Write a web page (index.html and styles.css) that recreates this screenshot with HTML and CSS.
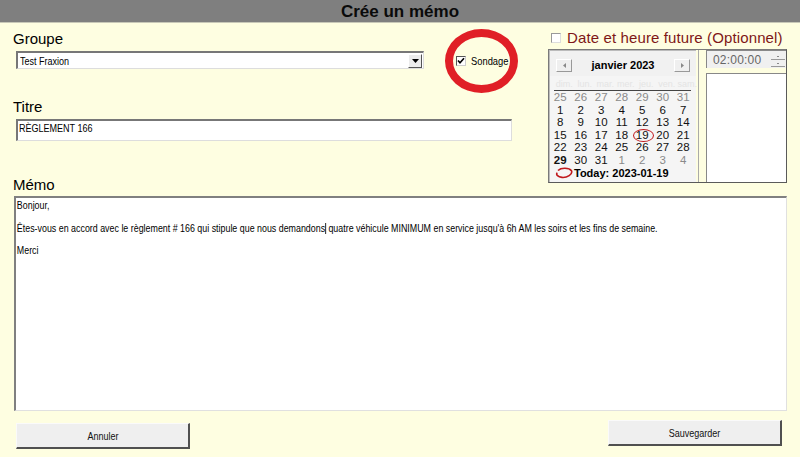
FILE: index.html
```html
<!DOCTYPE html>
<html lang="fr">
<head>
<meta charset="utf-8">
<title>Crée un mémo</title>
<link rel="stylesheet" href="styles.css">
</head>
<body>
<div class="titlebar">Crée un mémo</div>
<div class="main">
  <div class="top">
    <div class="left">
      <div class="label">Groupe</div>
      <div class="row-groupe">
        <div class="select">
          <span class="select-text narrow">Test Fraxion</span>
          <span class="select-btn"><svg width="7" height="4" viewBox="0 0 7 4"><path d="M0 0H7L3.5 4Z" fill="#000"/></svg></span>
        </div>
        <div class="sondage">
          <span class="cb"><svg width="8" height="8" viewBox="0 0 8 8"><path d="M1 3.5L3 5.8L7 1.2" stroke="#000" stroke-width="1.6" fill="none"/></svg></span>
          <span class="sondage-text narrow">Sondage</span>
          <span class="ring"></span>
        </div>
      </div>
      <div class="label label-titre">Titre</div>
      <div class="input"><span class="narrow">RÈGLEMENT 166</span></div>
      <div class="label label-memo">Mémo</div>
    </div>
    <div class="right">
      <div class="datechk"><span class="cb cb-empty"></span><span class="date-text">Date et heure future (Optionnel)</span></div>
      <div class="picker">
        <div class="cal">
          <div class="cal-head">
            <span class="navbtn"><svg width="3" height="5" viewBox="0 0 3 5"><path d="M3 0V5L0 2.5Z" fill="#888"/></svg></span>
            <span class="month">janvier 2023</span>
            <span class="navbtn"><svg width="3" height="5" viewBox="0 0 3 5"><path d="M0 0V5L3 2.5Z" fill="#888"/></svg></span>
          </div>
          <div class="dow"><span>dim.</span><span>lun.</span><span>mar.</span><span>mer.</span><span>jeu.</span><span>ven.</span><span>sam.</span></div>
          <div class="days">
            <span class="o">25</span><span class="o">26</span><span class="o">27</span><span class="o">28</span><span class="o">29</span><span class="o">30</span><span class="o">31</span>
            <span>1</span><span>2</span><span>3</span><span>4</span><span>5</span><span>6</span><span>7</span>
            <span>8</span><span>9</span><span>10</span><span>11</span><span>12</span><span>13</span><span>14</span>
            <span>15</span><span>16</span><span>17</span><span>18</span><span class="today">19<i class="mark"></i></span><span>20</span><span>21</span>
            <span>22</span><span>23</span><span>24</span><span>25</span><span>26</span><span>27</span><span>28</span>
            <span class="b">29</span><span>30</span><span>31</span><span class="o">1</span><span class="o">2</span><span class="o">3</span><span class="o">4</span>
          </div>
          <div class="todayline"><svg width="18" height="12" viewBox="0 0 18 12"><path d="M3 3.5C6 0.5 14 0.5 16.5 3.8C18 7.5 12 10.8 7 10.4C3 10 0.6 7.8 2.2 5.6" stroke="#c0181c" stroke-width="1.6" fill="none"/></svg><span>Today: 2023-01-19</span></div>
        </div>
        <div class="timecol">
          <div class="timebox">
            <span class="time">02:00:00</span>
            <span class="spin"><span class="spin-up"></span><span class="spin-down"></span></span>
          </div>
          <div class="listbox"></div>
        </div>
      </div>
    </div>
  </div>
  <div class="memo">
    <div class="memo-text">
      <p>Bonjour,</p>
      <p>&nbsp;</p>
      <p>Êtes-vous en accord avec le règlement # 166 qui stipule que nous demandons<span class="caret"></span> quatre véhicule MINIMUM en service jusqu'à 6h AM les soirs et les fins de semaine.</p>
      <p>&nbsp;</p>
      <p>Merci</p>
    </div>
  </div>
  <div class="buttons">
    <div class="btn btn-cancel"><span class="narrow">Annuler</span></div>
    <div class="btn btn-save"><span class="narrow">Sauvegarder</span></div>
  </div>
</div>
</body>
</html>
```
FILE: styles.css
```css
html, body {
  margin: 0;
  padding: 0;
}
body {
  width: 800px;
  height: 457px;
  overflow: hidden;
  background: #fefee1;
  font-family: "Liberation Sans", Arial, sans-serif;
  color: #000;
}
.narrow {
  display: inline-block;
  transform: scaleX(0.82);
  transform-origin: 0 50%;
  white-space: nowrap;
}
.titlebar {
  height: 23px;
  line-height: 23px;
  background: #7f7f7f;
  text-align: center;
  font-weight: bold;
  font-size: 17px;
  color: #0a0a0a;
  border-bottom: 1px solid #c8c8b8;
  box-sizing: border-box;
}
.main {
  display: flex;
  flex-direction: column;
}
.top {
  display: flex;
  padding: 7px 13px 0 13px;
  justify-content: space-between;
}
.left {
  display: flex;
  flex-direction: column;
  width: 520px;
}
.label {
  font-size: 15px;
  line-height: 17px;
}
.row-groupe {
  display: flex;
  align-items: center;
  margin-top: 4px;
  margin-left: 3px;
}
.select {
  width: 408px;
  height: 18px;
  box-sizing: border-box;
  background: #fff;
  border-top: 2px solid #777;
  border-left: 2px solid #777;
  border-right: 1px solid #ddd;
  border-bottom: 1px solid #ddd;
  display: flex;
  align-items: center;
  justify-content: space-between;
}
.select-text {
  font-size: 11px;
  margin-left: 2px;
}
.select-btn {
  width: 14px;
  height: 14px;
  box-sizing: border-box;
  background: #ececec;
  border-top: 1px solid #fff;
  border-left: 1px solid #fff;
  border-right: 1px solid #555;
  border-bottom: 1px solid #555;
  display: flex;
  align-items: center;
  justify-content: center;
  margin-right: 1px;
}
.sondage {
  position: relative;
  display: flex;
  align-items: center;
  margin-left: 32px;
  margin-top: 2px;
  width: 60px;
}
.cb {
  width: 10px;
  height: 10px;
  box-sizing: border-box;
  background: #fff;
  border-top: 1px solid #555;
  border-left: 1px solid #555;
  border-right: 1px solid #ccc;
  border-bottom: 1px solid #ccc;
  display: flex;
  align-items: center;
  justify-content: center;
  flex: none;
}
.sondage-text {
  font-size: 11px;
  margin-left: 5px;
  transform: scaleX(0.85);
}
.ring {
  position: absolute;
  left: -11px;
  top: -26px;
  width: 73px;
  height: 64px;
  box-sizing: border-box;
  border: 8px solid #e01f26;
  border-radius: 50%;
}
.label-titre {
  margin-top: 29px;
}
.input {
  margin-top: 4px;
  margin-left: 3px;
  width: 496px;
  height: 22px;
  box-sizing: border-box;
  background: #fff;
  border-top: 2px solid #777;
  border-left: 2px solid #777;
  border-right: 1px solid #ddd;
  border-bottom: 1px solid #ddd;
  font-size: 11px;
  padding: 1px 0 0 1px;
  line-height: 12px;
}
.label-memo {
  margin-top: 35px;
}
.right {
  width: 239px;
  display: flex;
  flex-direction: column;
}
.datechk {
  display: flex;
  align-items: center;
  padding-left: 3px;
  height: 17px;
  margin-top: -1px;
}
.cb-empty {
  border-color: #999 #ddd #ddd #999;
}
.date-text {
  margin-left: 6px;
  font-size: 15px;
  letter-spacing: 0.12px;
  color: #7e1717;
}
.picker {
  margin-top: 3px;
  height: 134px;
  box-sizing: border-box;
  border-top: 1px solid #7a7a7a;
  border-left: 1px solid #7a7a7a;
  border-right: 1px solid #5a5a5a;
  border-bottom: 1px solid #5a5a5a;
  display: flex;
  justify-content: space-between;
}
.cal {
  width: 146px;
  background: #f5f5f5;
  border-top: 1px solid #bbb;
  border-left: 1px solid #bbb;
  display: flex;
  flex-direction: column;
  font-size: 11px;
}
.cal-head {
  height: 22px;
  display: flex;
  align-items: center;
  justify-content: space-between;
  padding: 3px 6px 0 6px;
  background: #f1f1f1;
}
.navbtn {
  width: 16px;
  height: 13px;
  box-sizing: border-box;
  border-right: 1px solid #999;
  border-bottom: 1px solid #999;
  border-top: 1px solid #fff;
  border-left: 1px solid #fff;
  background: #efefef;
  display: flex;
  align-items: center;
  justify-content: center;
}
.month {
  font-weight: bold;
  font-size: 11px;
}
.dow {
  display: grid;
  grid-template-columns: repeat(7, 20.5px);
  margin: 3px 5px 0 4px;
  padding-bottom: 1px;
  border-bottom: 1px solid #444;
  font-size: 9px;
  color: #e4e4e4;
  text-align: center;
}
.days {
  display: grid;
  grid-template-columns: repeat(7, 20.5px);
  grid-auto-rows: 12.6px;
  line-height: 12.6px;
  text-align: center;
  font-size: 11.5px;
  color: #111;
}
.days .o {
  color: #8a8a8a;
}
.days .b {
  font-weight: bold;
}
.today {
  position: relative;
}
.mark {
  position: absolute;
  left: 1px;
  top: 0;
  width: 21px;
  height: 13px;
  box-sizing: border-box;
  border: 1.6px solid #c0181c;
  border-radius: 50%;
}
.todayline {
  display: flex;
  align-items: center;
  padding-left: 5px;
  font-weight: bold;
  font-size: 11px;
  height: 13px;
}
.todayline svg {
  margin-right: 1px;
}
.timecol {
  width: 81px;
  display: flex;
  flex-direction: column;
  border-left: 1px solid #aaa;
  margin-left: 2px;
  padding-left: 7px;
  background: #fefee1;
}
.timebox {
  height: 18px;
  box-sizing: border-box;
  border-top: 1px solid #888;
  border-left: 1px solid #888;
  background: #f0f0f0;
  display: flex;
  align-items: center;
  justify-content: space-between;
}
.time {
  color: #666;
  font-size: 12px;
  padding-left: 6px;
  letter-spacing: 0.2px;
}
.spin {
  display: flex;
  flex-direction: column;
  width: 14px;
  margin-right: 1px;
}
.spin-up, .spin-down {
  height: 7px;
  box-sizing: border-box;
  border-bottom: 1px solid #999;
  position: relative;
}
.spin-up::after, .spin-down::after {
  content: "";
  position: absolute;
  left: 6px;
  top: 3px;
  width: 2px;
  height: 1px;
  background: #888;
}
.listbox {
  margin-top: 5px;
  flex: 1;
  background: #fff;
  border-top: 1px solid #888;
  border-left: 1px solid #888;
}
.memo {
  margin: 3px 13px 0 14px;
  height: 215px;
  box-sizing: border-box;
  background: #fff;
  border-top: 2px solid #808080;
  border-left: 2px solid #808080;
  border-right: 1px solid #e0e0e0;
  border-bottom: 1px solid #e0e0e0;
  overflow: hidden;
}
.memo-text {
  font-size: 10.5px;
  line-height: 11.3px;
  padding: 2px 0 0 1px;
  width: 120%;
  transform: scaleX(0.845);
  transform-origin: 0 0;
}
.memo-text p {
  margin: 0;
  white-space: nowrap;
}
.caret {
  display: inline-block;
  width: 1px;
  height: 11px;
  background: #000;
  vertical-align: -2px;
}
.buttons {
  display: flex;
  justify-content: space-between;
  align-items: flex-start;
  padding: 9px 18px 0 16px;
}
.btn {
  width: 174px;
  height: 26px;
  box-sizing: border-box;
  background: #efefef;
  border-top: 1px solid #fafafa;
  border-left: 1px solid #fafafa;
  border-right: 2px solid #505050;
  border-bottom: 2px solid #505050;
  display: flex;
  align-items: center;
  justify-content: center;
  font-size: 11px;
  color: #111;
}
.btn .narrow {
  transform-origin: 50% 50%;
}
.btn-cancel {
  margin-top: 3px;
}
```
